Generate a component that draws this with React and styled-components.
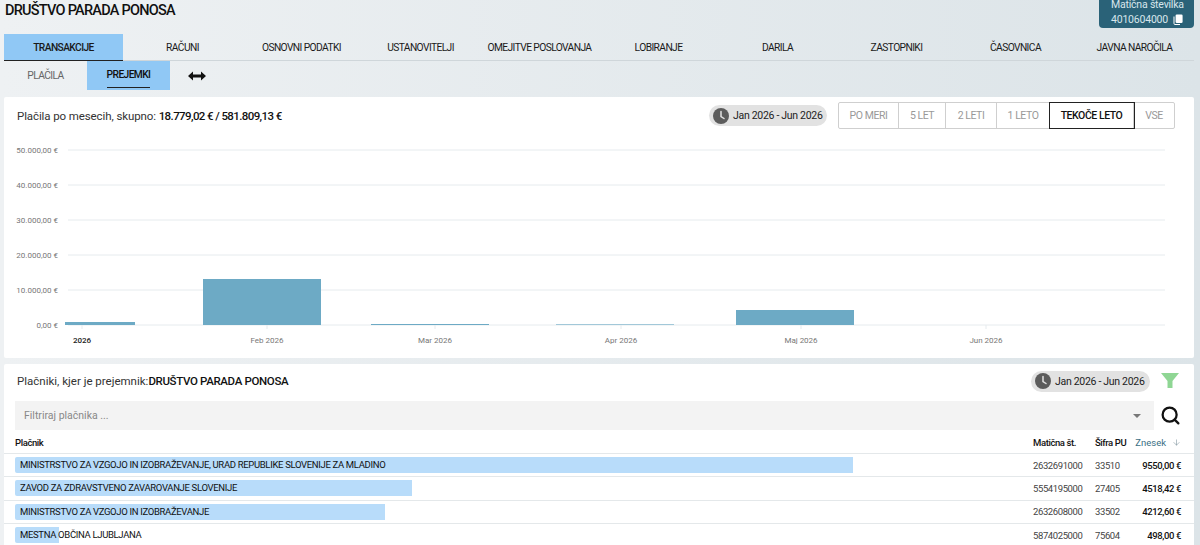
import React from 'react';
import styled, { createGlobalStyle } from 'styled-components';
import { ArrowDown, Search } from 'lucide-react';

const Global = createGlobalStyle`
  html, body { margin: 0; padding: 0; height: 545px; overflow: hidden; }
  body {
    font-family: Roboto, "Open Sans", sans-serif;
    color: #111;
    background: linear-gradient(90deg, #eef1f3 0%, #dce4e8 100%);
  }
  * { box-sizing: border-box; }
`;

const Page = styled.div`
  padding: 0 6px 0 4px;
  height: 545px;
  overflow: hidden;
`;

const Header = styled.div`
  display: flex;
  justify-content: space-between;
  height: 34px;
`;

const Title = styled.h1`
  margin: 2px 0 0 1px;
  font-size: 14.5px;
  line-height: 17px;
  font-weight: 500;
  letter-spacing: -0.75px;
  color: #111;
`;

const IdBox = styled.div`
  display: flex;
  flex-direction: column;
  width: 95px;
  height: 28px;
  padding: 0 0 0 12px;
  background: #2a6278;
  border-radius: 0 0 4px 4px;
  color: #d8e6ec;
  font-size: 10.5px;
  letter-spacing: -0.2px;
`;

const IdLabel = styled.div`
  height: 9px;
  line-height: 9px;
  white-space: nowrap;
`;

const IdValue = styled.div`
  display: flex;
  align-items: center;
  gap: 5px;
  margin-top: 3px;
  line-height: 15px;
`;

const Tabs = styled.div`
  display: grid;
  grid-template-columns: repeat(10, 119px);
  height: 27px;
  border-bottom: 1px solid #cfd6da;
`;

const Tab = styled.div`
  display: flex;
  align-items: center;
  justify-content: center;
  height: 27px;
  font-size: 10.25px;
  letter-spacing: -0.6px;
  font-weight: ${({ $active }) => ($active ? 500 : 400)};
  color: #1a1a1a;
  white-space: nowrap;
  background: ${({ $active }) => ($active ? '#90c8f5' : 'transparent')};
  border-bottom: ${({ $active }) => ($active ? '1px solid #222' : 'none')};
`;

const SubTabs = styled.div`
  display: flex;
  align-items: center;
  height: 36px;
  padding-bottom: 7px;
`;

const SubTab = styled.div`
  width: 83px;
  height: 29px;
  display: flex;
  align-items: center;
  justify-content: center;
  font-size: 10.25px;
  letter-spacing: -0.6px;
  font-weight: ${({ $active }) => ($active ? 500 : 400)};
  color: ${({ $active }) => ($active ? '#111' : '#666')};
  background: ${({ $active }) => ($active ? '#90c8f5' : 'transparent')};
`;

const SubLabel = styled.span`
  padding: 5px 0 6px;
  border-bottom: ${({ $active }) => ($active ? '1px solid #222' : 'none')};
`;

const Swap = styled.svg`
  margin-left: 18px;
`;

const Card = styled.section`
  background: #fff;
  border-radius: 2px;
  width: 1190px;
`;

const ChartCard = styled(Card)`
  height: 261px;
  padding: 5px 19px 0 13px;
  margin-bottom: 6px;
`;

const CardHead = styled.div`
  display: flex;
  align-items: center;
  height: 27px;
  gap: 11px;
`;

const CardTitle = styled.div`
  flex: 1;
  font-size: 11.5px;
  letter-spacing: -0.1px;
  color: #333;
  b { font-weight: 500; color: #111; letter-spacing: -0.6px; }
`;

const PayersTitle = styled(CardTitle)`
  letter-spacing: 0;
  b { letter-spacing: -0.35px; }
`;

const Pill = styled.div`
  display: flex;
  align-items: center;
  gap: 4px;
  height: 21px;
  width: ${({ $w }) => $w}px;
  padding: 0 0 0 4px;
  border-radius: 11px;
  background: #e2e2e2;
  font-size: 10.5px;
  letter-spacing: -0.3px;
  color: #222;
  white-space: nowrap;
`;

const Ranges = styled.div`
  display: flex;
  height: 27px;
  border: 1px solid #cfcfcf;
  border-radius: 2px;
`;

const Range = styled.div`
  display: flex;
  align-items: center;
  justify-content: center;
  width: ${({ $w }) => $w}px;
  font-size: 10.5px;
  letter-spacing: -0.45px;
  color: ${({ $active }) => ($active ? '#111' : '#999')};
  font-weight: ${({ $active }) => ($active ? 500 : 400)};
  border-right: 1px solid #cfcfcf;
  outline: ${({ $active }) => ($active ? '1px solid #222' : 'none')};
  &:last-child { border-right: none; }
`;

const ChartSvg = styled.svg`
  display: block;
  margin: 0 0 0 -13px;
  text {
    font-family: Roboto, "Open Sans", sans-serif;
    font-size: 8px;
    fill: #777;
  }
`;

const PayersCard = styled(Card)`
  height: 190px;
  overflow: hidden;
`;

const PayersHead = styled.div`
  display: flex;
  align-items: center;
  height: 34px;
  padding: 0 15px 0 13px;
  gap: 11px;
`;

const Filter = styled.div`
  display: flex;
  align-items: center;
  gap: 6px;
  padding: 3px 13px 0 11px;
`;

const FilterInput = styled.div`
  flex: 1;
  height: 29px;
  display: flex;
  align-items: center;
  justify-content: space-between;
  padding: 0 13px 0 9px;
  background: #f3f3f3;
  font-size: 10.5px;
  color: #888;
`;

const Caret = styled.span`
  width: 0;
  height: 0;
  border-left: 4px solid transparent;
  border-right: 4px solid transparent;
  border-top: 4px solid #777;
`;

const Row = styled.div`
  display: grid;
  grid-template-columns: 1018px 62px 30px 1fr;
  align-items: center;
  height: ${({ $head }) => ($head ? '24px' : '23.3px')};
  padding: ${({ $head }) => ($head ? '2px' : '0')} 13px 0 11px;
  border-bottom: 1px solid #e4e8ea;
  font-size: 9.5px;
  letter-spacing: -0.4px;
  color: #444;
  white-space: nowrap;
`;

const HeadCell = styled.div`
  font-weight: 500;
  color: #111;
`;

const SortCell = styled(HeadCell)`
  display: flex;
  align-items: center;
  justify-content: flex-end;
  gap: 6px;
  color: #3b6f85;
  font-weight: 400;
  letter-spacing: 0;
`;

const NameCell = styled.div`
  position: relative;
  height: 16px;
  line-height: 16px;
  color: #111;
  padding-left: 5px;
  letter-spacing: -0.33px;
`;

const Bar = styled.div`
  position: absolute;
  left: 0;
  top: 0;
  bottom: 0;
  background: #b8dcfa;
  border-radius: 2px 0 0 2px;
`;

const NameText = styled.span`
  position: relative;
`;

const Amount = styled.div`
  text-align: right;
  font-weight: 500;
  color: #111;
`;

const ClockIcon = ({ size = 16 }) => (
  <svg width={size} height={size} viewBox="0 0 16 16">
    <circle cx="8" cy="8" r="8" fill="#5c5c5c" />
    <path d="M8 3.5V8.5L11 10.5" fill="none" stroke="#e2e2e2" strokeWidth="1.5" strokeLinecap="round" />
  </svg>
);

const CopyIcon = () => (
  <svg width="10" height="11" viewBox="0 0 10 11">
    <path d="M1 2.5V9.5a1 1 0 0 0 1 1H7" fill="none" stroke="#fff" strokeWidth="1" />
    <rect x="2.6" y="0.5" width="7" height="8.5" rx="1.2" fill="#fff" />
  </svg>
);

const Funnel = () => (
  <svg width="18" height="16" viewBox="0 0 18 16">
    <path d="M0 0H18L11.5 8V15H6.5V8Z" fill="#8fd694" />
  </svg>
);

const ranges = [
  { label: 'PO MERI', w: 60 },
  { label: '5 LET', w: 47 },
  { label: '2 LETI', w: 51 },
  { label: '1 LETO', w: 53 },
  { label: 'TEKOČE LETO', w: 84, active: true },
  { label: 'VSE', w: 40 },
];

const tabs = ['TRANSAKCIJE', 'RAČUNI', 'OSNOVNI PODATKI', 'USTANOVITELJI', 'OMEJITVE POSLOVANJA', 'LOBIRANJE', 'DARILA', 'ZASTOPNIKI', 'ČASOVNICA', 'JAVNA NAROČILA'];

const yLabels = [
  ['50.000,00 €', 150],
  ['40.000,00 €', 185],
  ['30.000,00 €', 220],
  ['20.000,00 €', 255],
  ['10.000,00 €', 290],
  ['0,00 €', 325],
];

const bars = [
  [65, 70, 3],
  [203, 118, 46],
  [371, 118, 1],
  [556, 118, 0.6],
  [736, 118, 15],
];

const xLabels = [
  ['2026', 82, true],
  ['Feb 2026', 267],
  ['Mar 2026', 435],
  ['Apr 2026', 621],
  ['Maj 2026', 801],
  ['Jun 2026', 986],
];

const rows = [
  { name: 'MINISTRSTVO ZA VZGOJO IN IZOBRAŽEVANJE, URAD REPUBLIKE SLOVENIJE ZA MLADINO', id: '2632691000', pu: '33510', amount: '9550,00 €', bar: 838 },
  { name: 'ZAVOD ZA ZDRAVSTVENO ZAVAROVANJE SLOVENIJE', id: '5554195000', pu: '27405', amount: '4518,42 €', bar: 397 },
  { name: 'MINISTRSTVO ZA VZGOJO IN IZOBRAŽEVANJE', id: '2632608000', pu: '33502', amount: '4212,60 €', bar: 370 },
  { name: 'MESTNA OBČINA LJUBLJANA', id: '5874025000', pu: '75604', amount: '498,00 €', bar: 44 },
];

const Chart = () => (
  <ChartSvg width="1190" height="229" viewBox="4 129 1190 229">
    {yLabels.map(([label, y]) => (
      <g key={label}>
        <line x1="68" x2="1165" y1={y} y2={y} stroke="#e6ebee" />
        <text x="58" y={y + 3} textAnchor="end">{label}</text>
      </g>
    ))}
    {xLabels.map(([label, x]) => (
      <line key={label} x1={x} x2={x} y1="325" y2="329" stroke="#e6ebee" />
    ))}
    {bars.map(([x, w, h]) => (
      <rect key={x} x={x} y={325 - h} width={w} height={h} fill="#6daac5" />
    ))}
    {xLabels.map(([label, x, bold]) => (
      <text key={label} x={x} y="343" textAnchor="middle" style={bold ? { fill: '#222', fontWeight: 500 } : undefined}>{label}</text>
    ))}
  </ChartSvg>
);

export default function App() {
  return (
    <Page>
      <Global />
      <Header>
        <Title>DRUŠTVO PARADA PONOSA</Title>
        <IdBox>
          <IdLabel>Matična številka</IdLabel>
          <IdValue>4010604000 <CopyIcon /></IdValue>
        </IdBox>
      </Header>
      <Tabs>
        {tabs.map((t, i) => <Tab key={t} $active={i === 0}>{t}</Tab>)}
      </Tabs>
      <SubTabs>
        <SubTab><SubLabel>PLAČILA</SubLabel></SubTab>
        <SubTab $active><SubLabel $active>PREJEMKI</SubLabel></SubTab>
        <Swap width="18" height="10" viewBox="0 0 18 10">
          <path d="M0 5L5 0.5V3.5H13V0.5L18 5L13 9.5V6.5H5V9.5Z" fill="#111" />
        </Swap>
      </SubTabs>
      <ChartCard>
        <CardHead>
          <CardTitle>Plačila po mesecih, skupno: <b>18.779,02 € / 581.809,13 €</b></CardTitle>
          <Pill $w={118}><ClockIcon />Jan 2026 - Jun 2026</Pill>
          <Ranges>
            {ranges.map((r) => <Range key={r.label} $w={r.w} $active={r.active}>{r.label}</Range>)}
          </Ranges>
        </CardHead>
        <Chart />
      </ChartCard>
      <PayersCard>
        <PayersHead>
          <PayersTitle>Plačniki, kjer je prejemnik:<b>DRUŠTVO PARADA PONOSA</b></PayersTitle>
          <Pill $w={119}><ClockIcon />Jan 2026 - Jun 2026</Pill>
          <Funnel />
        </PayersHead>
        <Filter>
          <FilterInput>Filtriraj plačnika ...<Caret /></FilterInput>
          <Search size={21} strokeWidth={2.6} color="#111" />
        </Filter>
        <Row $head>
          <HeadCell>Plačnik</HeadCell>
          <HeadCell>Matična št.</HeadCell>
          <HeadCell>Šifra PU</HeadCell>
          <SortCell>Znesek <ArrowDown size={9} strokeWidth={1.5} color="#7a8f9a" /></SortCell>
        </Row>
        {rows.map((r) => (
          <Row key={r.id}>
            <NameCell>
              <Bar style={{ width: r.bar }} />
              <NameText>{r.name}</NameText>
            </NameCell>
            <div>{r.id}</div>
            <div>{r.pu}</div>
            <Amount>{r.amount}</Amount>
          </Row>
        ))}
      </PayersCard>
    </Page>
  );
}
